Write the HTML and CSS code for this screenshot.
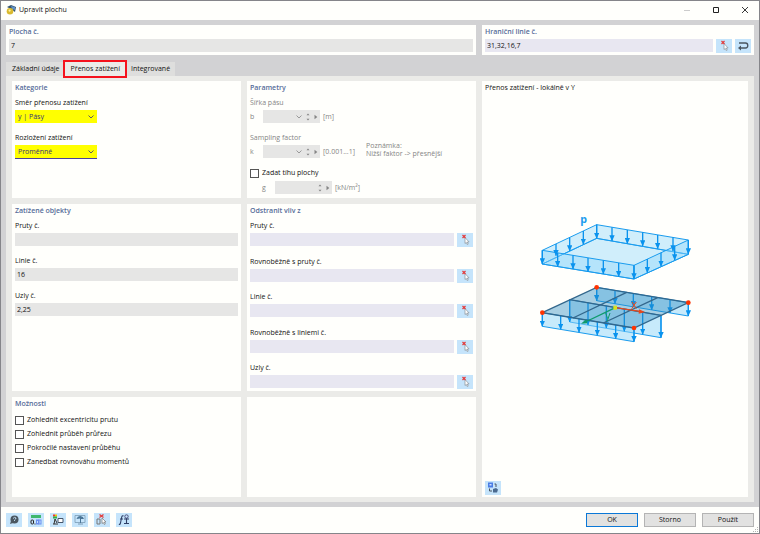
FILE: index.html
```html
<!DOCTYPE html>
<html lang="cs">
<head>
    <meta charset="UTF-8">
    <meta name="viewport" content="width=device-width, initial-scale=1.0">
    <title>Upravit plochu</title>
    <link rel="stylesheet" href="styles.css">
</head>
<body>
    <!-- Shared icons -->
    <svg class="sprite" aria-hidden="true">
        <symbol id="i-pick" viewBox="0 0 16 14">
            <path d="M8 4.5v6l1.3-1.1.9 2.1 1-.4-.9-2.1h1.8z" fill="#fff" stroke="#8a9299" stroke-width=".7"/>
            <path d="M5.500 2l3 3m0-3l-3 3" stroke="#e33b3b" stroke-width="1.2"/>
        </symbol>
        <symbol id="i-down" viewBox="0 0 6 4">
            <path d="M.5.5L3 3 5.5.5" fill="none" stroke="currentColor" stroke-width=".8"/>
        </symbol>
        <symbol id="i-spin" viewBox="0 0 4 8">
            <path d="M.5 2.200L2 .5l1.500 1.700zM.5 5.800L2 7.500l1.500-1.700z" fill="currentColor"/>
        </symbol>
        <symbol id="i-right" viewBox="0 0 4 6">
            <path d="M.5.8v4.400L3.300 3z" fill="currentColor"/>
        </symbol>
    </svg>

    <div class="window">
        <header class="titlebar">
            <svg class="app-icon" viewBox="0 0 10 10">
                <path d="M1 2L5 0l5 2-1 5-4-3z" fill="#34546f"/>
                <path d="M5 1l4 1 0 3-3-1z" fill="#5f8fc4"/>
                <circle cx="4" cy="6.200" r="3.300" fill="#d9b92e"/>
                <circle cx="3.600" cy="5.600" r="1.100" fill="#fff3a0"/>
            </svg>
            <h1>Upravit plochu</h1>
            <div class="window-buttons">
                <button type="button" aria-label="Minimalizovat" disabled><svg viewBox="0 0 8 8"><path d="M1 4.500h6" stroke="#ccc"/></svg></button>
                <button type="button" aria-label="Maximalizovat"><svg viewBox="0 0 8 8"><path d="M1.500 1.500h5v5h-5z" fill="none" stroke="#222"/></svg></button>
                <button type="button" aria-label="Zavřít"><svg viewBox="0 0 8 8"><path d="M1 1l6 6m0-6L1 7" stroke="#222" stroke-width=".9"/></svg></button>
            </div>
        </header>

        <main class="content">
            <div class="top-row">
                <section class="card top-card">
                    <label class="card-title" for="surfaceNo">Plocha č.</label>
                    <input class="field" type="text" id="surfaceNo" value="7" readonly>
                </section>
                <section class="card top-card">
                    <label class="card-title" for="boundaryLines">Hraniční linie č.</label>
                    <div class="pick-row">
                        <input class="field editable" type="text" id="boundaryLines" value="31,32,16,7">
                        <button type="button" class="icon-btn" aria-label="Vybrat linie"><svg><use href="#i-pick"/></svg></button>
                        <button type="button" class="icon-btn" aria-label="Obrátit orientaci">
                            <svg viewBox="0 0 16 14"><path d="M4 4h6.500a2 2.200 0 0 1 0 5H5" fill="none" stroke="#4a5560" stroke-width="1.300"/><path d="M6 6.600v4.800L3 9z" fill="#4a5560"/></svg>
                        </button>
                    </div>
                </section>
            </div>

            <nav class="tabs">
                <button type="button" class="tab">Základní údaje</button>
                <button type="button" class="tab active">Přenos zatížení</button>
                <button type="button" class="tab">Integrované</button>
            </nav>

            <div class="pane">
                <section class="card">
                    <h2 class="card-title">Kategorie</h2>
                    <div class="form-list">
                        <div class="form-group">
                            <label for="direction">Směr přenosu zatížení</label>
                            <div class="select">
                                <select id="direction"><option>y | Pásy</option></select>
                                <svg><use href="#i-down"/></svg>
                            </div>
                        </div>
                        <div class="form-group">
                            <label for="distribution">Rozložení zatížení</label>
                            <div class="select focused">
                                <select id="distribution"><option>Proměnné</option></select>
                                <svg><use href="#i-down"/></svg>
                            </div>
                        </div>
                    </div>
                </section>

                <section class="card">
                    <h2 class="card-title">Parametry</h2>
                    <div class="form-list">
                        <div class="form-group muted">
                            <label for="stripWidth">Šířka pásu</label>
                            <div class="param">
                                <span class="symbol">b</span>
                                <div class="spin">
                                    <input type="text" id="stripWidth" disabled>
                                    <svg class="down"><use href="#i-down"/></svg>
                                    <svg class="updown"><use href="#i-spin"/></svg>
                                    <svg class="more"><use href="#i-right"/></svg>
                                </div>
                                <span>[m]</span>
                            </div>
                        </div>
                        <div class="with-note muted">
                            <div class="form-group">
                                <label for="sampling">Sampling factor</label>
                                <div class="param">
                                    <span class="symbol">k</span>
                                    <div class="spin">
                                        <input type="text" id="sampling" disabled>
                                        <svg class="down"><use href="#i-down"/></svg>
                                        <svg class="updown"><use href="#i-spin"/></svg>
                                        <svg class="more"><use href="#i-right"/></svg>
                                    </div>
                                    <span>[0.001...1]</span>
                                </div>
                            </div>
                            <p class="note">Poznámka:<br>Nižší faktor -&gt; přesnější</p>
                        </div>
                        <div class="weight">
                            <label class="check"><input type="checkbox"> Zadat tíhu plochy</label>
                            <div class="param indented muted">
                                <label class="symbol" for="weight">g</label>
                                <div class="spin">
                                    <input type="text" id="weight" disabled>
                                    <svg class="updown"><use href="#i-spin"/></svg>
                                    <svg class="more"><use href="#i-right"/></svg>
                                </div>
                                <span>[kN/m²]</span>
                            </div>
                        </div>
                    </div>
                </section>

                <section class="card preview">
                    <h2>Přenos zatížení - lokálně v Y</h2>
                    <div class="drawing">
                        <svg viewBox="0 0 570 450" role="img" aria-label="Přenos zatížení plochy">
                            <defs>
                                <marker id="arrow" markerUnits="userSpaceOnUse" markerWidth="18" markerHeight="16" refX="17" refY="8" orient="auto">
                                    <path d="M0 0l18 8-18 8z" fill="#0a93ee"/>
                                </marker>
                            </defs>
                            <!-- Load block -->
                            <g fill="#8fd6fa" fill-opacity=".42" stroke="#1a9cee" stroke-width="3" stroke-linejoin="round">
                                <path d="M67 177L230 100 505 148 342 222z"/>
                                <path d="M67 136L230 59V100L67 177z"/>
                                <path d="M230 59L505 105V148L230 100z"/>
                                <path d="M67 136L342 181V222L67 177z"/>
                                <path d="M342 181L505 105V148L342 222z"/>
                            </g>
                            <g stroke="#0a93ee" stroke-width="4" marker-end="url(#arrow)">
                                <path d="M67 136v41"/><path d="M113 144v41"/><path d="M159 151v41"/><path d="M204 159v41"/><path d="M250 166v41"/><path d="M296 174v41"/><path d="M342 181v41"/>
                                <path d="M108 117v35"/><path d="M149 98v40"/><path d="M190 78v40"/><path d="M230 59v41"/>
                                <path d="M276 67v41"/><path d="M322 75v41"/><path d="M368 82v41"/><path d="M413 90v41"/><path d="M459 97v41"/><path d="M505 105v42"/>
                                <path d="M464 124v41"/><path d="M423 143v41"/><path d="M382 162v41"/>
                            </g>
                            <text x="181" y="54" class="load-letter">p</text>

                            <!-- Strip loads -->
                            <g fill="#8fd6fa" fill-opacity=".5" stroke="#1a9cee" stroke-width="3">
                                <path d="M230 247L505 293V333L230 287z"/>
                                <path d="M149 284L423 331V398L149 351z"/>
                                <path d="M67 323L342 369V410L67 364z"/>
                            </g>
                            <g stroke="#0a93ee" stroke-width="4" marker-end="url(#arrow)">
                                <path d="M230 247v40"/><path d="M285 256v40"/><path d="M340 265v40"/><path d="M395 275v40"/><path d="M450 284v40"/><path d="M505 293v40"/>
                                <path d="M149 284v67"/><path d="M204 293v67"/><path d="M259 302v67"/><path d="M313 312v67"/><path d="M368 321v67"/><path d="M423 331v67"/>
                                <path d="M67 323v41"/><path d="M122 332v41"/><path d="M177 341v41"/><path d="M232 350v41"/><path d="M287 360v41"/><path d="M342 369v41"/>
                            </g>
                            <!-- Surface -->
                            <g fill="#2588bd" fill-opacity=".4" stroke="#33678c" stroke-width="4">
                                <path d="M67 323L230 247 505 293 342 369z"/>
                                <path d="M149 284L423 331M159 339L320 262M250 354L413 278" fill="none"/>
                            </g>
                            <!-- Local axes -->
                            <path d="M286 308L360 319" stroke="#e8481c" stroke-width="4"/>
                            <path d="M357 313l18 8-19 5z" fill="#e8481c"/>
                            <path d="M286 308L196 351" stroke="#0f9b6c" stroke-width="4"/>
                            <path d="M198 343l-15 13 20-1z" fill="#0f9b6c"/>
                            <path d="M336 291l13 20M349 291l-14 20" stroke="#e8481c" stroke-width="3"/>
                            <path d="M257 324l6 17M270 324l-9 26" stroke="#0f9b6c" stroke-width="3"/>
                            <path d="M280 302h11v12h-11z" fill="#d9e21c"/>
                            <g fill="#ff3300">
                                <circle cx="230" cy="247" r="7"/><circle cx="505" cy="293" r="7"/><circle cx="342" cy="369" r="7"/><circle cx="67" cy="323" r="7"/>
                            </g>
                        </svg>
                    </div>
                    <button type="button" class="icon-btn" aria-label="Přepnout zobrazení">
                        <svg viewBox="0 0 16 14"><path d="M3 1.500h5v5H3z" fill="#4a7de4"/><path d="M4.500 3h2v1.500h-2z" fill="#cfe0ff"/><path d="M9.500 3h1.500v3M4.500 7.500V10H7" fill="none" stroke="#4b5560"/><path d="M8 8l3-1 2 1.500-1 3H8z" fill="#4a6a90"/></svg>
                    </button>
                </section>

                <section class="card">
                    <h2 class="card-title">Zatížené objekty</h2>
                    <div class="form-list">
                        <div class="form-group">
                            <label for="members">Pruty č.</label>
                            <input class="field" type="text" id="members" readonly>
                        </div>
                        <div class="form-group">
                            <label for="lines">Linie č.</label>
                            <input class="field" type="text" id="lines" value="16" readonly>
                        </div>
                        <div class="form-group">
                            <label for="nodes">Uzly č.</label>
                            <input class="field" type="text" id="nodes" value="2,25" readonly>
                        </div>
                    </div>
                </section>

                <section class="card">
                    <h2 class="card-title">Odstranit vliv z</h2>
                    <div class="form-list spread">
                        <div class="form-group">
                            <label for="exMembers">Pruty č.</label>
                            <div class="pick-row">
                                <input class="field editable" type="text" id="exMembers">
                                <button type="button" class="icon-btn" aria-label="Vybrat pruty"><svg><use href="#i-pick"/></svg></button>
                            </div>
                        </div>
                        <div class="form-group">
                            <label for="exParallelMembers">Rovnoběžně s pruty č.</label>
                            <div class="pick-row">
                                <input class="field editable" type="text" id="exParallelMembers">
                                <button type="button" class="icon-btn" aria-label="Vybrat rovnoběžné pruty"><svg><use href="#i-pick"/></svg></button>
                            </div>
                        </div>
                        <div class="form-group">
                            <label for="exLines">Linie č.</label>
                            <div class="pick-row">
                                <input class="field editable" type="text" id="exLines">
                                <button type="button" class="icon-btn" aria-label="Vybrat linie"><svg><use href="#i-pick"/></svg></button>
                            </div>
                        </div>
                        <div class="form-group">
                            <label for="exParallelLines">Rovnoběžně s liniemi č.</label>
                            <div class="pick-row">
                                <input class="field editable" type="text" id="exParallelLines">
                                <button type="button" class="icon-btn" aria-label="Vybrat rovnoběžné linie"><svg><use href="#i-pick"/></svg></button>
                            </div>
                        </div>
                        <div class="form-group">
                            <label for="exNodes">Uzly č.</label>
                            <div class="pick-row">
                                <input class="field editable" type="text" id="exNodes">
                                <button type="button" class="icon-btn" aria-label="Vybrat uzly"><svg><use href="#i-pick"/></svg></button>
                            </div>
                        </div>
                    </div>
                </section>

                <section class="card">
                    <h2 class="card-title">Možnosti</h2>
                    <div class="check-list">
                        <label class="check"><input type="checkbox"> Zohlednit excentricitu prutu</label>
                        <label class="check"><input type="checkbox"> Zohlednit průběh průřezu</label>
                        <label class="check"><input type="checkbox"> Pokročilé nastavení průběhu</label>
                        <label class="check"><input type="checkbox"> Zanedbat rovnováhu momentů</label>
                    </div>
                </section>

                <section class="card"></section>
            </div>
        </main>

        <footer class="footer">
            <div class="tools">
                <button type="button" class="icon-btn" aria-label="Nápověda">
                    <svg viewBox="0 0 16 14"><circle cx="8.500" cy="6.500" r="4" fill="#4b5761"/><path d="M5 8l-1 3 3-1z" fill="#4b5761"/><path d="M7 5.500q1.500-2 3-.5 0 1-1.500 2v1" fill="none" stroke="#c5e4fb" stroke-width=".9"/></svg>
                </button>
                <button type="button" class="icon-btn" aria-label="Jednotky">
                    <svg viewBox="0 0 16 14"><path d="M3 2h10v3H3z" fill="#3fb86e"/><rect x="3" y="7" width="2.500" height="4" rx="1" fill="none" stroke="#222"/><path d="M6.500 11h1" stroke="#222"/><rect x="8.500" y="7" width="2" height="4" fill="none" stroke="#6b8ff0"/><rect x="11" y="7" width="2" height="4" fill="none" stroke="#6b8ff0"/></svg>
                </button>
                <button type="button" class="icon-btn" aria-label="Barvy">
                    <svg viewBox="0 0 16 14"><path d="M3 1.500h2v2H3z" fill="#e33"/><path d="M5 1.500h2v2H5z" fill="#f5c400"/><path d="M3 3.500h4v2H3z" fill="#2fae4d"/><path d="M4 11l1-5 2 4M3 11h5" fill="none" stroke="#333"/><path d="M8 5.500h5v4H8z" fill="#fff" stroke="#46566b"/></svg>
                </button>
                <button type="button" class="icon-btn" aria-label="Zobrazení">
                    <svg viewBox="0 0 16 14"><path d="M3 2.500h10v7H3z" fill="none" stroke="#7a9bb5" stroke-width=".8"/><path d="M4.500 6q1-3 4-3 3 .5 3.500 3L9 6v4H8V5.500z" fill="#4a7597"/><path d="M6 11h5" stroke="#7a9bb5"/></svg>
                </button>
                <button type="button" class="icon-btn" aria-label="Výběr objektů">
                    <svg viewBox="0 0 16 14"><path d="M5.500 1.500l4 3m0-3l-4 3" stroke="#e33b3b" stroke-width="1.300"/><path d="M3 6h3v5H3z" fill="none" stroke="#777"/><path d="M8 5v5.500l1.300-1 1 2 1-.5-1-2H12z" fill="#fff" stroke="#777" stroke-width=".7"/></svg>
                </button>
                <button type="button" class="icon-btn" aria-label="Funkce">
                    <svg viewBox="0 0 16 14"><path d="M7.500 3Q6 2 5.500 5l-1 5q-.5 2-1.500 1M4 6h3M8 6h5M10.500 5v5M8 10.500h5" fill="none" stroke="#2f3f66" stroke-width="1.100"/><circle cx="10.500" cy="3.500" r="1.700" fill="none" stroke="#4b4f80"/></svg>
                </button>
            </div>
            <div class="actions">
                <button type="button" class="btn primary">OK</button>
                <button type="button" class="btn">Storno</button>
                <button type="button" class="btn">Použít</button>
            </div>
            <svg class="grip" viewBox="0 0 6 6"><path d="M4 0h1v1H4zM2 2h1v1H2zM4 2h1v1H4zM0 4h1v1H0zM2 4h1v1H2zM4 4h1v1H4z" fill="#b4b4b4"/></svg>
        </footer>
    </div>
</body>
</html>
```

FILE: styles.css
```css
/* General Styling */
* {
    box-sizing: border-box;
}

body {
    margin: 0;
    font-family: "Open Sans", "Noto Sans", sans-serif;
    font-size: 7px;
    font-weight: 500;
    line-height: 10px;
    color: #111;
}

h1, h2, p {
    margin: 0;
    font-size: 7px;
    font-weight: 500;
}

button, input, select {
    font: inherit;
    color: inherit;
    margin: 0;
    padding: 0;
    border: none;
    border-radius: 0;
}

svg {
    display: block;
}

.sprite {
    display: none;
}

.window {
    display: flex;
    flex-direction: column;
    min-height: 100vh;
    border: 1px solid #85858a;
    background-color: #fffffc;
}

/* Title Bar */
.titlebar {
    display: flex;
    align-items: center;
    height: 19px;
    padding: 0 10px 2px 5px;
    gap: 3px;
}

.app-icon {
    width: 10px;
    height: 10px;
}

.window-buttons {
    display: flex;
    gap: 21px;
    margin-left: auto;
}

.window-buttons button {
    width: 8px;
    height: 8px;
    background: none;
}

.window-buttons svg {
    width: 8px;
    height: 8px;
}

/* Content */
.content {
    flex: 1;
    display: flex;
    flex-direction: column;
    padding: 5px;
    background-color: #d2d2d4;
}

.card {
    display: flex;
    flex-direction: column;
    min-width: 0;
    padding: 2px 3px;
    background-color: #fffffc;
}

.card-title {
    line-height: 9px;
    font-weight: 600;
    color: #566c99;
}

.top-row {
    display: grid;
    grid-template-columns: 470fr 272fr;
    gap: 6px;
}

.top-card {
    gap: 3px;
    height: 30px;
}

/* Fields */
.field {
    width: 100%;
    min-width: 0;
    height: 13px;
    padding: 0 2px;
    background-color: #e6e6e5;
}

.field.editable {
    background-color: #e8e7f1;
}

.pick-row {
    display: flex;
    gap: 3px;
}

.icon-btn {
    flex: none;
    width: 16px;
    height: 14px;
    background-color: #c5e4fb;
}

.icon-btn svg {
    width: 16px;
    height: 14px;
}

/* Tabs */
.tabs {
    display: flex;
    padding-top: 7px;
}

.tab {
    height: 14px;
    padding: 0 5px 0 6px;
    background-color: #dededd;
}

.tab.active {
    position: relative;
    background-color: #ebebe8;
    outline: 2px solid #f5121d;
}

/* Tab Pane */
.pane {
    flex: 1;
    display: grid;
    grid-template-columns: 229fr 229fr 266fr;
    grid-template-rows: 117fr 187fr 100fr;
    gap: 6px;
    padding: 5px 6px;
    background-color: #ebebe8;
}

.form-list {
    display: flex;
    flex-direction: column;
    gap: 10px;
    margin-top: 6px;
}

.form-list.spread {
    flex: 1;
    gap: 0;
    justify-content: space-between;
}

.form-group {
    display: flex;
    flex-direction: column;
    gap: 2px;
}

.muted {
    color: #858585;
}

/* Drop-downs */
.select {
    position: relative;
    width: 82px;
    color: #32307a;
}

.select select {
    display: block;
    width: 100%;
    height: 13px;
    padding: 0 3px;
    appearance: none;
    background-color: #ffff00;
}

.select.focused {
    box-shadow: 0 1px #4c4299;
}

.select svg {
    position: absolute;
    top: 5px;
    right: 3px;
    width: 6px;
    height: 4px;
    pointer-events: none;
}

/* Parameters */
.param {
    display: flex;
    align-items: center;
    gap: 3px;
}

.param.indented {
    padding-left: 12px;
}

.symbol {
    width: 10px;
}

.spin {
    display: flex;
    align-items: center;
    gap: 4px;
    width: 57px;
    padding-right: 2px;
    background-color: #e6e6e5;
}

.spin input {
    flex: 1;
    min-width: 0;
    height: 13px;
    background: none;
}

.spin .down {
    width: 6px;
    height: 4px;
}

.spin .updown {
    width: 4px;
    height: 8px;
}

.spin .more {
    width: 4px;
    height: 6px;
}

.with-note {
    display: flex;
    align-items: flex-end;
    gap: 11px;
}

.note {
    line-height: 8px;
}

.weight {
    display: flex;
    flex-direction: column;
    gap: 3px;
}

/* Checkboxes */
.check {
    display: flex;
    align-items: center;
    gap: 3px;
}

.check input {
    appearance: none;
    width: 9px;
    height: 9px;
    border: 1px solid #555;
    background-color: #fff;
}

.check input:checked {
    background-color: #555;
}

.check-list {
    display: flex;
    flex-direction: column;
    gap: 4px;
    margin-top: 7px;
}

/* Preview */
.preview {
    grid-column: 3;
    grid-row: 1 / 4;
}

.drawing {
    flex: 1;
    display: flex;
    align-items: center;
    justify-content: center;
    padding-bottom: 14px;
}

.drawing svg {
    width: 190px;
    max-width: 100%;
}

.load-letter {
    font-size: 32px;
    font-weight: bold;
    fill: #1a9cee;
}

/* Footer */
.footer {
    position: relative;
    display: flex;
    align-items: center;
    justify-content: space-between;
    height: 26px;
    padding: 0 5px;
}

.tools, .actions {
    display: flex;
    gap: 6px;
}

.btn {
    width: 52px;
    height: 14px;
    border: 1px solid #b4b4b4;
    background-color: #e2e2e1;
}

.btn.primary {
    border-color: #0b78d7;
}

.grip {
    position: absolute;
    right: 0;
    bottom: 0;
    width: 6px;
    height: 6px;
}
```
